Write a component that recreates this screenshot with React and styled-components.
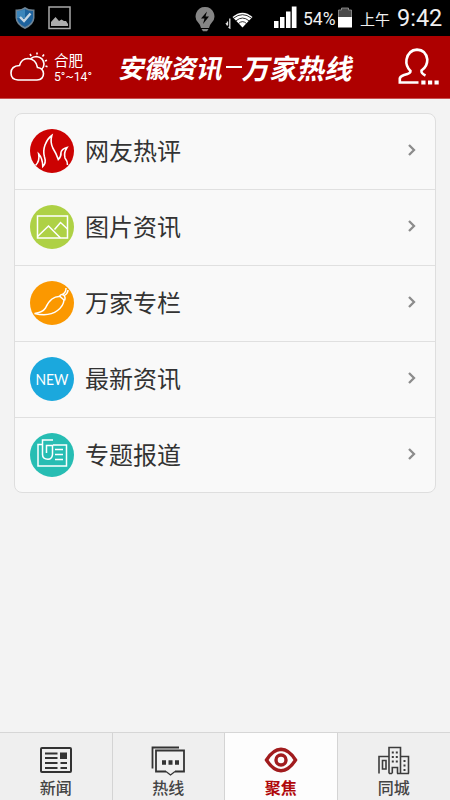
import React from 'react'
import styled, { createGlobalStyle } from 'styled-components'

const rows = [
  { title: '网友热评', color: '#cc0202', icon: <FireIcon /> },
  { title: '图片资讯', color: '#aed145', icon: <PictureIcon /> },
  { title: '万家专栏', color: '#fb9800', icon: <PepperIcon /> },
  { title: '最新资讯', color: '#1ba8dd', icon: <NewIcon /> },
  { title: '专题报道', color: '#27bdb3', icon: <TopicIcon /> },
]

const tabs = [
  { title: '新闻', icon: <NewsIcon /> },
  { title: '热线', icon: <ChatIcon /> },
  { title: '聚焦', icon: <EyeIcon />, active: true },
  { title: '同城', icon: <CityIcon /> },
]

const App = () => {
  return (
    <Container>
      <Global />
      <StatusBar>
        <StatusGroup>
          <ShieldIcon />
          <GalleryIcon />
        </StatusGroup>
        <StatusGroup>
          <BulbIcon />
          <WifiIcon />
          <SignalIcon />
          <Percent>54%</Percent>
          <BatteryIcon />
          <Period>上午</Period>
          <Clock>9:42</Clock>
        </StatusGroup>
      </StatusBar>

      <Header>
        <WeatherIcon />
        <Weather>
          <City>合肥</City>
          <Temp>5°~14°</Temp>
        </Weather>
        <Title>
          <TitlePart>安徽资讯</TitlePart>
          <Dash />
          <TitlePart $heavy>万家热线</TitlePart>
        </Title>
        <UserIcon />
      </Header>

      <Main>
        <Card>
          {rows.map((row) => (
            <Row key={row.title}>
              <Circle $color={row.color}>{row.icon}</Circle>
              <RowText>{row.title}</RowText>
              <Arrow viewBox="0 0 10 14">
                <path d="M2 2 L7 7 L2 12" />
              </Arrow>
            </Row>
          ))}
        </Card>
      </Main>

      <TabBar>
        {tabs.map((tab) => (
          <Tab key={tab.title} $active={tab.active}>
            {tab.icon}
            <TabText $active={tab.active}>{tab.title}</TabText>
          </Tab>
        ))}
      </TabBar>
    </Container>
  )
}

export default App

function ShieldIcon() {
  return (
    <Svg width="20" height="24" viewBox="0 0 20 24">
      <path d="M10 1 Q14 4 19.5 3.5 V12 Q19 19 10 23 Q1 19 .5 12 V3.5 Q6 4 10 1Z" fill="#6f8596" />
      <path d="M10 3 Q14 5.500 18 5 V12 Q17 18 10 21 Q3 18 2 12 V5 Q6 5.500 10 3Z" fill="#1d629d" />
      <path d="M10 3 Q6 5.500 2 5 V12 L10 12Z" fill="#3c86bb" />
      <path d="M5 11 L9 15 L15.500 7.500" fill="none" stroke="#c9d8e4" strokeWidth="2.400" />
    </Svg>
  )
}

function GalleryIcon() {
  return (
    <Svg width="23" height="24" viewBox="0 0 23 24">
      <rect x="1" y="1" width="21" height="21.500" fill="none" stroke="#a9a9a9" strokeWidth="1.500" />
      <path d="M3 20 V16 L7.500 11 L11 15 L13.500 13.500 L16 15 L18 15 L20 18 V20Z" fill="#adadad" />
    </Svg>
  )
}

function BulbIcon() {
  return (
    <BulbSvg width="20" height="25" viewBox="0 0 20 25">
      <path d="M10 0 A9.300 9.300 0 0 1 16.500 16 Q14.500 18 14 21 H6 Q5.500 18 3.500 16 A9.300 9.300 0 0 1 10 0Z" fill="#858585" />
      <path d="M6.500 22 H13.500 L12 24.300 H8Z" fill="#858585" />
      <path d="M12 4.500 L6 11.500 H9.500 L8 17 L14 9.500 H10.500Z" fill="#050505" />
    </BulbSvg>
  )
}

function WifiIcon() {
  return (
    <WifiSvg width="29" height="18" viewBox="0 0 29 18">
      <path d="M2.500 10.500 V14.500 M1 12 L2.500 14.500 M4.800 7.500 V17 L3.500 16" stroke="#ddd" strokeWidth="1.300" fill="none" />
      <path d="M7.500 6 Q17.500 -2.500 27.500 6 L17.500 16.500Z" fill="#fff" />
      <path d="M8.500 7.200 Q17.500 .2 26.500 7.200 M11 9.800 Q17.500 4.300 24 9.800 M13.500 12.500 Q17.500 8.800 21.500 12.500" stroke="#000" strokeWidth=".8" fill="none" />
    </WifiSvg>
  )
}

function SignalIcon() {
  return (
    <SignalSvg width="23" height="23" viewBox="0 0 23 23">
      <path d="M0 15 H4.500 V22 H0Z M6 11 H10.500 V22 H6Z M12 5.500 H16.500 V22 H12Z M17.800 .5 H22.500 V22 H17.800Z" fill="#fff" />
    </SignalSvg>
  )
}

function BatteryIcon() {
  return (
    <BatterySvg width="14" height="21" viewBox="0 0 14 21">
      <path d="M3.500 1 H10.500 V3 H13.500 V11 H.5 V3 H3.500Z" fill="#4a4a4a" stroke="#999" strokeWidth=".8" />
      <rect y="10" width="14" height="10.500" fill="#fff" />
    </BatterySvg>
  )
}

function WeatherIcon() {
  return (
    <LineSvg width="38" height="30" viewBox="0 0 38 30" stroke="#fff" strokeWidth="1.600">
      <path d="M8 28 H27 Q33.500 27.500 33.500 21.500 Q33 16 27.500 15.500 Q26 7 18 6.500 Q11.500 6.500 9.500 13.500 Q1 14 1 21 Q1 27.500 8 28Z" />
      <path d="M20.500 6.800 Q23 4.500 26.500 4.500 Q33.500 5.500 34 12 Q34 15.500 31.500 17.500" />
      <path d="M27 .5 V2.500 M20 2 L21.200 4 M34 2.500 L32.500 4.500 M35 9 L37 8.200 M35.500 14 L37.500 14.700" />
    </LineSvg>
  )
}

function UserIcon() {
  return (
    <UserSvg width="42" height="39" viewBox="0 0 42 39" stroke="#fff" strokeWidth="2.600">
      <path d="M20.500 34.500 H1.800 V30.500 Q2 28.500 6 27 Q13 25.500 12.500 23 Q7.500 18 8.500 11.500 Q10.500 2 19 1.600 Q28 2 29.300 11.500 Q29.500 18.500 23.500 22.500 Q23 25.500 27.500 27.500" />
      <path d="M23.300 34.500 H27.500 M30 34.500 H34.200 M36.500 34.500 H40.700" strokeWidth="3.800" />
    </UserSvg>
  )
}

function FireIcon() {
  return (
    <LineSvg width="44" height="44" viewBox="0 0 44 44" stroke="#fff" strokeWidth="1.600">
      <path d="M5.500 36.500 Q10 32 8.700 25 Q12.500 29 12.800 37.500 Q16.500 34 14.500 28 Q12.800 22 15 16 Q17.500 9.500 21.800 6.500 Q20 13 22.800 19 Q26 24 28.300 30.500 Q31.300 27.500 31 23.500 Q31.500 20 37 18.500 Q33.500 24 35 29 Q37.500 32 37.500 36" />
    </LineSvg>
  )
}

function PictureIcon() {
  return (
    <LineSvg width="44" height="44" viewBox="0 0 44 44" stroke="#fff" strokeWidth="1.500">
      <rect x="7.500" y="11" width="30" height="22" />
      <path d="M7.500 31.500 L18.500 21 L30.500 33 M24.500 24.500 L30.500 17.500 L37.500 24" />
    </LineSvg>
  )
}

function PepperIcon() {
  return (
    <LineSvg width="44" height="44" viewBox="0 0 44 44" stroke="#fff" strokeWidth="1.500">
      <path d="M4.500 32.500 Q12.500 31.500 15.500 27 Q18 21 22 18 Q26 15 30 15.500 L34 19 Q33.500 25 27.500 29.500 Q19 36 4.500 32.500Z" />
      <path d="M29.500 15.500 Q31 12.500 33.500 14 Q36 16 34.500 19.500 M32.500 13.500 Q36 11.500 36 7 M34.500 14.500 Q38 12 38 9" />
    </LineSvg>
  )
}

function NewIcon() {
  return (
    <LineSvg width="44" height="44" viewBox="0 0 44 44">
      <NewText x="5.500" y="27.500" textLength="33" lengthAdjust="spacingAndGlyphs">NEW</NewText>
    </LineSvg>
  )
}

function TopicIcon() {
  return (
    <LineSvg width="44" height="44" viewBox="0 0 44 44" stroke="#fff" strokeWidth="1.500">
      <path d="M12 11.500 H8 V33 H36.500 V12 H23" />
      <path d="M16.500 20 V12.500 H22.500 V21.500 Q22 26.300 18 26.300 Q12.500 26 12.500 21.500 V7 H23" />
      <path d="M25 16.500 H33 M25 21.500 H33 M25 26.500 H33" />
    </LineSvg>
  )
}

function NewsIcon() {
  return (
    <LineSvg width="34" height="28" viewBox="0 0 34 28" stroke="#333" strokeWidth="2">
      <rect x="2" y="2" width="30" height="24" rx="1" />
      <path d="M6 7.500 H18.500 M6 12 H18.500 M6 17 H18.500 M6 22 H18.500 M21.500 17 H28 M21.500 22 H28" strokeWidth="1.800" />
      <rect x="21" y="6.500" width="7" height="6.500" fill="#333" stroke="none" />
    </LineSvg>
  )
}

function ChatIcon() {
  return (
    <LineSvg width="34" height="30" viewBox="1 0 34 30" stroke="#333" strokeWidth="1.800">
      <path d="M2.500 22.500 V1.500 H29" />
      <path d="M16 25.500 H6 V4.500 H34 V25.500 H25" />
      <path d="M16 25.500 L20.500 29 L25 25.500" strokeWidth="1.200" />
      <path d="M12 16.500 H16 M18.500 16.500 H22.500 M25 16.500 H29" strokeWidth="4.500" />
    </LineSvg>
  )
}

function EyeIcon() {
  return (
    <LineSvg width="34" height="28" viewBox="0 0 34 28" stroke="#a11c1e" strokeWidth="3.400">
      <path d="M2.500 14 Q9 3.500 17 3.300 Q25 3.500 31.500 14 Q25 24.500 17 24.700 Q9 24.500 2.500 14Z" />
      <circle cx="17" cy="14" r="5" />
    </LineSvg>
  )
}

function CityIcon() {
  return (
    <LineSvg width="32" height="29" viewBox="0 0 32 29" stroke="#3c3c3c" strokeWidth="1.600">
      <path d="M1 27.500 V10.500 H10.500 M11 27.500 V1.500 H22.500 V27.500 M22.500 10.500 H30.500 V27.500 M11 27.500 H14 M19 27.500 H31" />
      <path d="M4.500 14.500 H8 V23 H4.500Z M14.300 27.500 V21.500 H19.500 V27.500" />
      <path d="M14.800 5.500 V19 M18.800 5.500 V19 M26.500 14 V25" strokeWidth="2" strokeDasharray="2 2.500" />
    </LineSvg>
  )
}

const Global = createGlobalStyle`
body {
  margin: 0;
  font-family: "Noto Sans CJK SC", sans-serif;
}
* {
  box-sizing: border-box;
}
`

const Svg = styled.svg`
display: block;
flex-shrink: 0;
`
const LineSvg = styled(Svg)`
fill: none;
`
const BulbSvg = styled(Svg)`
margin: 2px -1px 0 1px;
`
const WifiSvg = styled(Svg)`
margin: 3px 20px 0 11px;
`
const SignalSvg = styled(Svg)`
margin: 0 6px 2px 0;
`
const BatterySvg = styled(Svg)`
margin-bottom: 2px;
`
const UserSvg = styled(LineSvg)`
margin-top: 1px;
`

const Container = styled.div`
display: flex;
flex-direction: column;
width: 450px;
height: 800px;
background: #f3f3f3;
overflow: hidden;
`

const StatusBar = styled.div`
display: flex;
justify-content: space-between;
height: 36px;
padding: 0 9px 0 15px;
background: #000;
color: #f0f0f0;
`
const StatusGroup = styled.div`
display: flex;
align-items: center;
& > svg:first-child + svg:last-child {
  margin-left: 13px;
}
`
const Percent = styled.div`
width: 35px;
font: 17.5px/20px Roboto, sans-serif;
white-space: nowrap;
padding-top: 2px;
`
const Period = styled.div`
width: 45px;
padding: 2px 0 0 8px;
font-size: 15px;
line-height: 20px;
white-space: nowrap;
`
const Clock = styled.div`
width: 44px;
font: 23.5px/28px Roboto, sans-serif;
white-space: nowrap;
`

const Header = styled.div`
display: flex;
align-items: center;
height: 63px;
padding: 0 10px;
background: #ae0000;
border-bottom: 1px solid #c85050;
color: #fff;
`
const Weather = styled.div`
width: 72px;
padding: 1px 0 0 6px;
`
const City = styled.div`
font-size: 14.5px;
line-height: 18px;
`
const Temp = styled.div`
font: 12.2px/16px Roboto, sans-serif;
`
const Title = styled.div`
display: flex;
align-items: center;
flex: 1;
`
const TitlePart = styled.span`
font-size: ${({ $heavy }) => ($heavy ? '27.5px' : '26px')};
font-weight: 700;
line-height: 34px;
transform: skewX(-12deg);
white-space: nowrap;
`
const Dash = styled.span`
width: 16px;
height: 2px;
margin: 0 2px;
background: #fff;
`

const Main = styled.div`
flex: 1;
padding: 14px 14px 0;
`
const Card = styled.div`
height: 380px;
background: #f9f9f9;
border: 1px solid #dedede;
border-radius: 8px;
`
const Row = styled.div`
display: flex;
align-items: center;
height: 75px;
padding: 0 18px 1px 15px;
& + & {
  height: 76px;
  border-top: 1px solid #e0e0e0;
}
`
const Circle = styled.div`
width: 44px;
height: 44px;
border-radius: 50%;
background: ${({ $color }) => $color};
overflow: hidden;
`
const RowText = styled.div`
flex: 1;
margin-left: 11px;
padding-bottom: 3px;
font-size: 24px;
line-height: 35px;
color: #333;
`
const Arrow = styled(Svg)`
width: 10px;
height: 14px;
margin-bottom: 2px;
fill: none;
stroke: #8c8c8c;
stroke-width: 2.3;
`
const NewText = styled.text`
font-family: Lato, sans-serif;
font-size: 16px;
fill: #fff;
`

const TabBar = styled.div`
display: grid;
grid-template-columns: repeat(4, 1fr);
height: 68px;
border-top: 1px solid #d6d6d6;
`
const Tab = styled.div`
display: flex;
flex-direction: column;
align-items: center;
justify-content: space-between;
padding: 13px 0 4px;
background: ${({ $active }) => ($active ? '#fdfdfd' : '#efefef')};
border-right: 1px solid #d4d4d4;
&:last-child {
  border-right: none;
}
`
const TabText = styled.div`
font-size: 16px;
font-weight: ${({ $active }) => ($active ? 700 : 500)};
line-height: 22px;
color: ${({ $active }) => ($active ? '#b00a0c' : '#444')};
`
